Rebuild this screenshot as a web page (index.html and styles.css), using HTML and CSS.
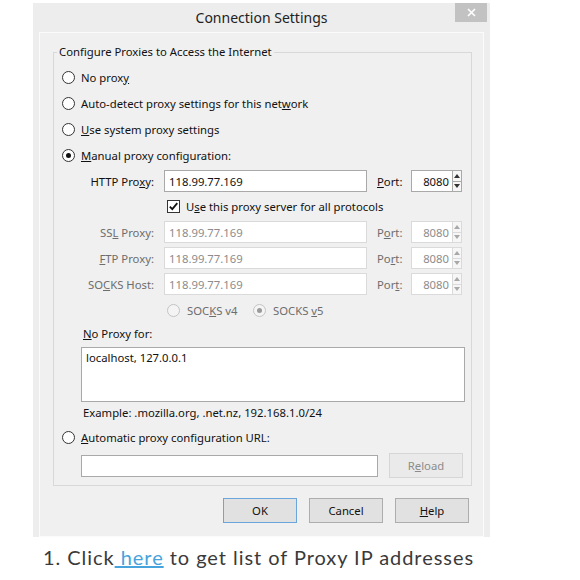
FILE: index.html
```html
<!DOCTYPE html>
<html>
<head>
<meta charset="utf-8">
<link rel="stylesheet" href="styles.css">
</head>
<body>
<div class="dialog">
  <div class="titlebar">
    <span class="title">Connection Settings</span>
    <span class="close"><svg width="9" height="9" viewBox="0 0 9 9"><path d="M1 1L8 8M8 1L1 8" stroke="#fff" stroke-width="1.6"/></svg></span>
  </div>
  <div class="frame">
    <fieldset class="group">
      <legend>Configure Proxies to Access the Internet</legend>
      <div class="opt"><span class="radio"></span><span>No prox<u>y</u></span></div>
      <div class="opt"><span class="radio"></span><span>Auto-detect proxy settings for this net<u>w</u>ork</span></div>
      <div class="opt"><span class="radio"></span><span><u>U</u>se system proxy settings</span></div>
      <div class="opt"><span class="radio on"></span><span><u>M</u>anual proxy configuration:</span></div>

      <div class="prow">
        <span class="plabel">HTTP Pro<u>x</u>y:</span>
        <input class="host" type="text" value="118.99.77.169" readonly>
        <span class="portlabel"><u>P</u>ort:</span>
        <span class="port"><input class="portval" type="text" value="8080" readonly><span class="spin"><span class="up"></span><span class="down"></span></span></span>
      </div>
      <div class="cbrow"><span class="check"><svg width="11" height="11" viewBox="0 0 11 11"><path d="M1.8 5.6L4.3 8.2L9.3 2.2" fill="none" stroke="#111" stroke-width="1.8"/></svg></span><span>U<u>s</u>e this proxy server for all protocols</span></div>
      <div class="prow off">
        <span class="plabel">SS<u>L</u> Proxy:</span>
        <input class="host" type="text" value="118.99.77.169" readonly>
        <span class="portlabel">P<u>o</u>rt:</span>
        <span class="port"><input class="portval" type="text" value="8080" readonly><span class="spin"><span class="up"></span><span class="down"></span></span></span>
      </div>
      <div class="prow off">
        <span class="plabel"><u>F</u>TP Proxy:</span>
        <input class="host" type="text" value="118.99.77.169" readonly>
        <span class="portlabel">Po<u>r</u>t:</span>
        <span class="port"><input class="portval" type="text" value="8080" readonly><span class="spin"><span class="up"></span><span class="down"></span></span></span>
      </div>
      <div class="prow off">
        <span class="plabel">SO<u>C</u>KS Host:</span>
        <input class="host" type="text" value="118.99.77.169" readonly>
        <span class="portlabel">Por<u>t</u>:</span>
        <span class="port"><input class="portval" type="text" value="8080" readonly><span class="spin"><span class="up"></span><span class="down"></span></span></span>
      </div>
      <div class="socksrow">
        <span class="sopt v4"><span class="radio dis"></span><span>SOC<u>K</u>S v4</span></span>
        <span class="sopt"><span class="radio dis on"></span><span>SOCKS <u>v</u>5</span></span>
      </div>
      <div class="nplabel"><u>N</u>o Proxy for:</div>
      <textarea class="noproxy" readonly>localhost, 127.0.0.1</textarea>
      <div class="example">Example: .mozilla.org, .net.nz, 192.168.1.0/24</div>
      <div class="opt"><span class="radio"></span><span><u>A</u>utomatic proxy configuration URL:</span></div>
      <div class="urlrow">
        <input class="url" type="text" value="" readonly>
        <button class="btn reload" type="button">R<u>e</u>load</button>
      </div>
    </fieldset>
    <div class="buttons">
      <button class="btn ok" type="button">OK</button>
      <button class="btn" type="button">Cancel</button>
      <button class="btn" type="button"><u>H</u>elp</button>
    </div>
  </div>
</div>
<p class="note">1. Click<a href="#"> here</a> to get list of Proxy IP addresses</p>
</body>
</html>
```
FILE: styles.css
```css
html, body {
  margin: 0;
  background: #fff;
}
body {
  font-family: "Noto Sans", "Open Sans", sans-serif;
  font-size: 11.3px;
  color: #111;
}
u { text-decoration: underline; text-underline-offset: 1px; }

.dialog {
  margin: 3px 0 0 33px;
  width: 457px;
  background: #ededed;
}
.titlebar {
  height: 29px;
  display: grid;
  grid-template-columns: 1fr auto 1fr;
  align-items: start;
}
.title {
  grid-column: 2;
  font-size: 14px;
  line-height: 29px;
  color: #222;
}
.close {
  grid-column: 3;
  justify-self: end;
  margin-right: 3px;
  width: 32px;
  height: 19px;
  background: #c2c2c2;
  display: flex;
  align-items: center;
  justify-content: center;
}
.frame {
  margin: 0 6px 3px;
  border: 1px solid #fbfbfb;
  background: #f0f0f0;
  display: flex;
  flex-direction: column;
}
.group {
  margin: 11px 11px 0 13px;
  padding: 4px 0 7px;
  border: 1px solid #d8d8d8;
  min-width: 0;
}
.group legend {
  padding: 0 2px;
  margin-left: 3px;
  line-height: 16px;
}
.opt {
  height: 26px;
  display: flex;
  align-items: center;
  gap: 6px;
  padding-left: 8px;
}
.radio {
  width: 13px;
  height: 13px;
  box-sizing: border-box;
  border: 1px solid #333;
  border-radius: 50%;
  background: #fff;
  display: flex;
  align-items: center;
  justify-content: center;
  flex: none;
}
.radio.on::after {
  content: "";
  width: 5px;
  height: 5px;
  border-radius: 50%;
  background: #111;
}
.radio.dis {
  border-color: #c4c4c4;
  background: #f4f4f4;
}
.radio.dis.on::after { background: #9a9a9a; }

.prow {
  height: 26px;
  display: flex;
  align-items: center;
}
.plabel {
  width: 100px;
  text-align: right;
  margin-right: 10px;
}
.host, .portval, .url, .noproxy {
  font: inherit;
  color: #111;
  box-sizing: border-box;
  border: 1px solid #a9a9a9;
  background: #fff;
  outline: none;
  margin: 0;
}
.host {
  width: 203px;
  height: 22px;
  padding: 0 4px;
}
.portlabel {
  width: 34px;
  margin-left: 10px;
}
.port {
  display: flex;
}
.portval {
  width: 42px;
  height: 22px;
  padding: 0 3px;
  text-align: right;
}
.spin {
  width: 9px;
  height: 22px;
  box-sizing: border-box;
  border: 1px solid #a9a9a9;
  border-left: 0;
  display: flex;
  flex-direction: column;
  background: #f6f6f6;
}
.spin span {
  flex: 1;
  display: flex;
  align-items: center;
  justify-content: center;
}
.spin .up { border-bottom: 1px solid #a9a9a9; }
.spin .up::after {
  content: "";
  border: 3px solid transparent;
  border-bottom: 4px solid #333;
  border-top: 0;
}
.spin .down::after {
  content: "";
  border: 3px solid transparent;
  border-top: 4px solid #333;
  border-bottom: 0;
}
.prow.off { color: #6d6d6d; }
.prow.off .host, .prow.off .portval, .prow.off .spin, .prow.off .spin .up {
  border-color: #dadada;
  color: #8c8c8c;
}
.prow.off .spin .up::after { border-bottom-color: #a8a8a8; }
.prow.off .spin .down::after { border-top-color: #a8a8a8; }

.cbrow {
  height: 25px;
  display: flex;
  align-items: center;
  gap: 6px;
  padding-left: 113px;
}
.check {
  width: 13px;
  height: 13px;
  box-sizing: border-box;
  border: 1px solid #333;
  background: #fff;
  display: flex;
  align-items: center;
  justify-content: center;
}
.socksrow {
  height: 27px;
  display: flex;
  align-items: center;
  padding-left: 113px;
  color: #6d6d6d;
}
.sopt {
  display: flex;
  align-items: center;
  gap: 7px;
}
.sopt.v4 { width: 86px; }
.nplabel {
  height: 20px;
  line-height: 20px;
  padding-left: 29px;
}
.noproxy {
  display: block;
  margin: 3px 0 0 27px;
  width: 384px;
  height: 55px;
  padding: 2px 4px;
  resize: none;
  overflow: hidden;
}
.example {
  height: 22px;
  line-height: 22px;
  padding-left: 29px;
}
.urlrow {
  display: flex;
  align-items: center;
  margin-top: 3px;
  padding-left: 27px;
  gap: 11px;
}
.url {
  width: 297px;
  height: 22px;
}
.btn {
  font: inherit;
  color: #111;
  width: 74px;
  height: 25px;
  box-sizing: border-box;
  border: 1px solid #adadad;
  background: #e1e1e1;
  padding: 0;
  margin: 0;
}
.reload {
  color: #8c8c8c;
  border-color: #d6d6d6;
  background: #eaeaea;
}
.buttons {
  display: flex;
  justify-content: flex-end;
  gap: 12px;
  margin-top: 12px;
  padding: 0 14px 13px 0;
}
.btn.ok { border-color: #6aa6dc; }

.note {
  margin: 8px 0 0 43px;
  font-family: "Lato", "Noto Sans", sans-serif;
  font-size: 20px;
  line-height: 24px;
  letter-spacing: 0.95px;
  color: #3a3a3a;
}
.note a {
  color: #47a3dc;
  text-decoration: underline;
}
```
